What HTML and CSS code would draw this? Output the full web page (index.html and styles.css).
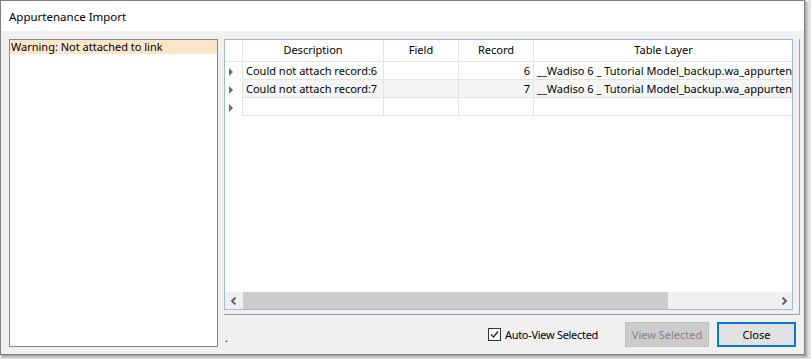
FILE: index.html
```html
<!DOCTYPE html>
<html lang="en">
<head>
    <meta charset="UTF-8">
    <title>Appurtenance Import</title>
    <link rel="stylesheet" href="styles.css">
</head>
<body>
    <div class="window">
        <div class="titlebar">Appurtenance Import</div>
        <div class="client">
            <div class="listbox">
                <div class="list-item selected">Warning: Not attached to link</div>
            </div>
            <div class="main">
                <div class="grid-panel">
                    <div class="grid">
                        <div class="grid-body">
                            <div class="row header">
                                <div class="cell rowhead"></div>
                                <div class="cell col-desc">Description</div>
                                <div class="cell col-field">Field</div>
                                <div class="cell col-record">Record</div>
                                <div class="cell col-layer">Table Layer</div>
                            </div>
                            <div class="row">
                                <div class="cell rowhead"><span class="arrow"></span></div>
                                <div class="cell col-desc">Could not attach record:6</div>
                                <div class="cell col-field"></div>
                                <div class="cell col-record">6</div>
                                <div class="cell col-layer">__Wadiso 6 _ Tutorial Model_backup.wa_appurtenan</div>
                            </div>
                            <div class="row alt">
                                <div class="cell rowhead"><span class="arrow"></span></div>
                                <div class="cell col-desc">Could not attach record:7</div>
                                <div class="cell col-field"></div>
                                <div class="cell col-record">7</div>
                                <div class="cell col-layer">__Wadiso 6 _ Tutorial Model_backup.wa_appurtenan</div>
                            </div>
                            <div class="row">
                                <div class="cell rowhead"><span class="arrow"></span></div>
                                <div class="cell col-desc"></div>
                                <div class="cell col-field"></div>
                                <div class="cell col-record"></div>
                                <div class="cell col-layer"></div>
                            </div>
                        </div>
                        <div class="hscroll">
                            <div class="scroll-btn">
                                <svg width="8" height="8" viewBox="0 0 8 8"><polyline points="5.5,0.5 2,4 5.5,7.5" fill="none" stroke="#606060" stroke-width="2"/></svg>
                            </div>
                            <div class="scroll-track">
                                <div class="scroll-thumb"></div>
                            </div>
                            <div class="scroll-btn">
                                <svg width="8" height="8" viewBox="0 0 8 8"><polyline points="2.5,0.5 6,4 2.5,7.5" fill="none" stroke="#606060" stroke-width="2"/></svg>
                            </div>
                        </div>
                    </div>
                </div>
                <div class="footer">
                    <span class="status">.</span>
                    <label class="check">
                        <span class="box">
                            <svg width="11" height="11" viewBox="0 0 11 11"><polyline points="2,5.5 4.5,8 9,2.5" fill="none" stroke="#222" stroke-width="1.2"/></svg>
                        </span>
                        Auto-View Selected
                    </label>
                    <button class="btn" disabled>View Selected</button>
                    <button class="btn default">Close</button>
                </div>
            </div>
        </div>
    </div>
</body>
</html>
```

FILE: styles.css
```css
body {
    margin: 0;
    width: 811px;
    height: 359px;
    overflow: hidden;
    background: #e6e6e6;
    font-family: "Noto Sans", "Open Sans", sans-serif;
    font-size: 11px;
    color: #000;
}
.window {
    width: 805px;
    height: 355px;
    box-sizing: border-box;
    border: 1px solid #808080;
    background: #f0f0f0;
    display: flex;
    flex-direction: column;
    box-shadow: 1px 1px 0 #a8a8a8, 2px 2px 1px #b8b8b8, 3px 3px 2px #c8c8c8;
}
.titlebar {
    height: 30px;
    background: #fff;
    padding-left: 8px;
    font-size: 11.5px;
    line-height: 32px;
}
.client {
    flex: 1;
    display: flex;
    padding: 8px 4px 7px 8px;
}
.listbox {
    flex: none;
    width: 209px;
    box-sizing: border-box;
    border: 1px solid #828790;
    background: #fff;
}
.list-item {
    height: 14px;
    line-height: 13px;
    padding-left: 1px;
}
.list-item.selected {
    background: #fde6c8;
}
.main {
    flex: 1;
    min-width: 0;
    margin-left: 6px;
    display: flex;
    flex-direction: column;
}
.grid-panel {
    height: 276px;
    box-sizing: border-box;
    padding: 0 6px 4px 0;
    border-right: 1px solid #a0a0a0;
    border-bottom: 1px solid #a0a0a0;
}
.grid {
    height: 271px;
    box-sizing: border-box;
    border: 1px solid #a3b9d3;
    background: #fff;
    display: flex;
    flex-direction: column;
}
.grid-body {
    flex: 1;
    min-width: 0;
    overflow: hidden;
}
.row {
    display: flex;
    height: 18px;
    white-space: nowrap;
}
.row.header {
    height: 22px;
}
.row.alt .cell {
    background: #f5f5f5;
}
.row.alt .cell.rowhead {
    background: #fff;
}
.cell {
    flex: none;
    box-sizing: border-box;
    border-right: 1px solid #e3e3e3;
    border-bottom: 1px solid #e3e3e3;
    padding: 0 3px;
    line-height: 17px;
    overflow: hidden;
}
.header .cell {
    text-align: center;
    line-height: 20px;
}
.cell.rowhead {
    width: 18px;
    padding: 0 0 0 4px;
    border-bottom: none;
    display: flex;
    align-items: center;
}
.header .cell.rowhead {
    border-bottom: 1px solid #e3e3e3;
}
.col-desc { width: 141px; }
.col-field { width: 75px; }
.col-record { width: 75px; text-align: right; }
.col-layer { width: 260px; }
.arrow {
    width: 0;
    height: 0;
    margin-top: 2px;
    border-left: 4px solid #6a6a6a;
    border-top: 4px solid transparent;
    border-bottom: 4px solid transparent;
}
.hscroll {
    height: 17px;
    display: flex;
    background: #f0f0f0;
}
.scroll-btn {
    width: 17px;
    display: flex;
    align-items: center;
    justify-content: center;
}
.scroll-track {
    flex: 1;
    padding-left: 1px;
}
.scroll-thumb {
    width: 425px;
    height: 17px;
    background: #cdcdcd;
}
.footer {
    flex: 1;
    display: flex;
    align-items: center;
    padding: 7px 4px 0 1px;
}
.status {
    flex: 1;
    padding-top: 6px;
}
.check {
    display: flex;
    align-items: center;
    margin-right: 27px;
    letter-spacing: -0.3px;
}
.box {
    width: 13px;
    height: 13px;
    box-sizing: border-box;
    border: 1px solid #333;
    background: #fff;
    margin-right: 4px;
    display: flex;
    align-items: center;
    justify-content: center;
}
.btn {
    height: 25px;
    font-family: inherit;
    font-size: 11px;
    background: #e1e1e1;
    border: 1px solid #adadad;
    padding: 0;
    color: #000;
}
.btn:disabled {
    width: 84px;
    margin-right: 8px;
    background: #cccccc;
    border-color: #bfbfbf;
    color: #838383;
}
.btn.default {
    width: 79px;
    border: 2px solid #0078d7;
}
```
